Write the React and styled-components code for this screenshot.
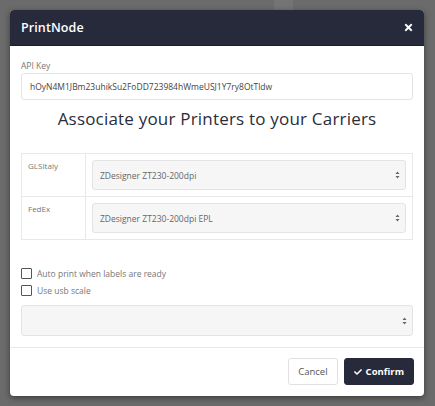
import React from "react";
import styled, { createGlobalStyle } from "styled-components";
import { FaTimes, FaCheck } from "react-icons/fa";

const GlobalStyle = createGlobalStyle`
  html, body {
    margin: 0;
    padding: 0;
    height: 100%;
    background: #6c6c6c;
  }
  body {
    font-family: "Open Sans", "Liberation Sans", sans-serif;
  }
`;

const Backdrop = styled.div`
  width: 435px;
  height: 406px;
  background: #6b6b6b;
  padding: 10px 11px 10px 10px;
  box-sizing: border-box;
  position: relative;
  overflow: hidden;
`;

const PageHint = styled.div`
  position: absolute;
  top: 0;
  left: 274px;
  width: 19px;
  height: 10px;
  background: #747474;
`;

const Modal = styled.div`
  position: relative;
  width: 414px;
  height: 386px;
  background: #fff;
  border-radius: 4px;
  display: flex;
  flex-direction: column;
  box-shadow: 0 2px 6px rgba(0, 0, 0, 0.45);
  overflow: hidden;
`;

const Header = styled.div`
  height: 36px;
  flex-shrink: 0;
  background: #272a3b;
  display: flex;
  align-items: center;
  justify-content: space-between;
  padding: 0 11px;
  color: #fff;
  border-bottom: 1px solid #1b1d29;
  box-sizing: border-box;
`;

const Title = styled.div`
  font-size: 12.5px;
  font-weight: 600;
  letter-spacing: 0.1px;
`;

const Close = styled.button`
  background: none;
  border: none;
  color: #fff;
  padding: 0;
  display: flex;
  font-size: 11px;
  margin-right: -1px;
`;

const Body = styled.div`
  padding: 11px 11px 0;
  display: flex;
  flex-direction: column;
`;

const Label = styled.label`
  font-size: 8.5px;
  line-height: 11px;
  color: #777;
  margin: 3px 0 2px;
`;

const TextInput = styled.div`
  height: 27px;
  border: 1px solid #e4e4e4;
  border-radius: 3px;
  box-sizing: border-box;
  display: flex;
  align-items: center;
  padding: 0 8px;
  font-size: 8.5px;
  color: #444;
`;

const Heading = styled.h2`
  margin: 7px 0 23px;
  line-height: 23px;
  text-align: center;
  font-size: 17px;
  font-weight: 400;
  color: #2a2d3c;
  letter-spacing: 0.2px;
`;

const Table = styled.div`
  display: grid;
  grid-template-columns: 64px 1fr;
  border: 1px solid #e8e8e8;
`;

const Cell = styled.div`
  border-right: ${(p) => (p.$first ? "1px solid #e8e8e8" : "none")};
  border-bottom: ${(p) => (p.$last ? "none" : "1px solid #e8e8e8")};
  padding: 6px;
  font-size: 8px;
  color: #777;
  height: ${(p) => (p.$last ? 42 : 43)}px;
  box-sizing: border-box;
`;

const SelectBox = styled.div`
  height: ${(p) => p.$h || 30}px;
  background: #f6f6f6;
  border: 1px solid #e3e3e3;
  border-radius: 3px;
  box-sizing: border-box;
  display: flex;
  align-items: center;
  justify-content: space-between;
  padding: 0 5px 0 7px;
  font-size: 8.5px;
  color: #666;
`;

const Checks = styled.div`
  margin-top: 27px;
  display: flex;
  flex-direction: column;
  gap: 5px;
`;

const CheckRow = styled.label`
  display: flex;
  align-items: center;
  gap: 5px;
  height: 12px;
  font-size: 8.5px;
  color: #777;
`;

const Box = styled.span`
  width: 9px;
  height: 9px;
  border: 1px solid #555;
  border-radius: 1px;
  display: inline-block;
`;

const Spacer = styled.div`
  height: 9px;
`;

const Footer = styled.div`
  margin-top: 11px;
  border-top: 1px solid #e9e9e9;
  display: flex;
  justify-content: flex-end;
  gap: 6px;
  padding: 10px 10px 0;
`;

const Button = styled.button`
  height: 27px;
  border-radius: 3px;
  font-family: inherit;
  font-size: 9.5px;
  display: flex;
  align-items: center;
  gap: 4px;
  padding: 0 9px;
  border: 1px solid ${(p) => (p.$dark ? "#272a3b" : "#e1e1e1")};
  background: ${(p) => (p.$dark ? "#272a3b" : "#fff")};
  color: ${(p) => (p.$dark ? "#fff" : "#555")};
  font-weight: ${(p) => (p.$dark ? 700 : 400)};
`;

function Arrows() {
  return (
    <svg width="5" height="8" viewBox="0 0 5 8">
      <path d="M2.5 0.5 L4.5 3 H0.5 Z M2.5 7.5 L4.5 5 H0.5 Z" fill="#666" />
    </svg>
  );
}

function Select({ value, h }) {
  return (
    <SelectBox $h={h}>
      <span>{value}</span>
      <Arrows />
    </SelectBox>
  );
}

export default function App() {
  return (
    <>
      <GlobalStyle />
      <Backdrop>
        <PageHint />
        <Modal>
          <Header>
            <Title>PrintNode</Title>
            <Close>
              <FaTimes />
            </Close>
          </Header>
          <Body>
            <Label>API Key</Label>
            <TextInput>hOyN4M1JBm23uhikSu2FoDD723984hWmeUSJ1Y7ry8OtTldw</TextInput>
            <Heading>Associate your Printers to your Carriers</Heading>
            <Table>
              <Cell $first>GLSItaly</Cell>
              <Cell>
                <Select value="ZDesigner ZT230-200dpi" />
              </Cell>
              <Cell $first $last>
                FedEx
              </Cell>
              <Cell $last>
                <Select value="ZDesigner ZT230-200dpi EPL" />
              </Cell>
            </Table>
            <Checks>
              <CheckRow>
                <Box />
                Auto print when labels are ready
              </CheckRow>
              <CheckRow>
                <Box />
                Use usb scale
              </CheckRow>
            </Checks>
            <Spacer />
            <Select value="" h={31} />
          </Body>
          <Footer>
            <Button>Cancel</Button>
            <Button $dark>
              <FaCheck size={8} />
              Confirm
            </Button>
          </Footer>
        </Modal>
      </Backdrop>
    </>
  );
}
